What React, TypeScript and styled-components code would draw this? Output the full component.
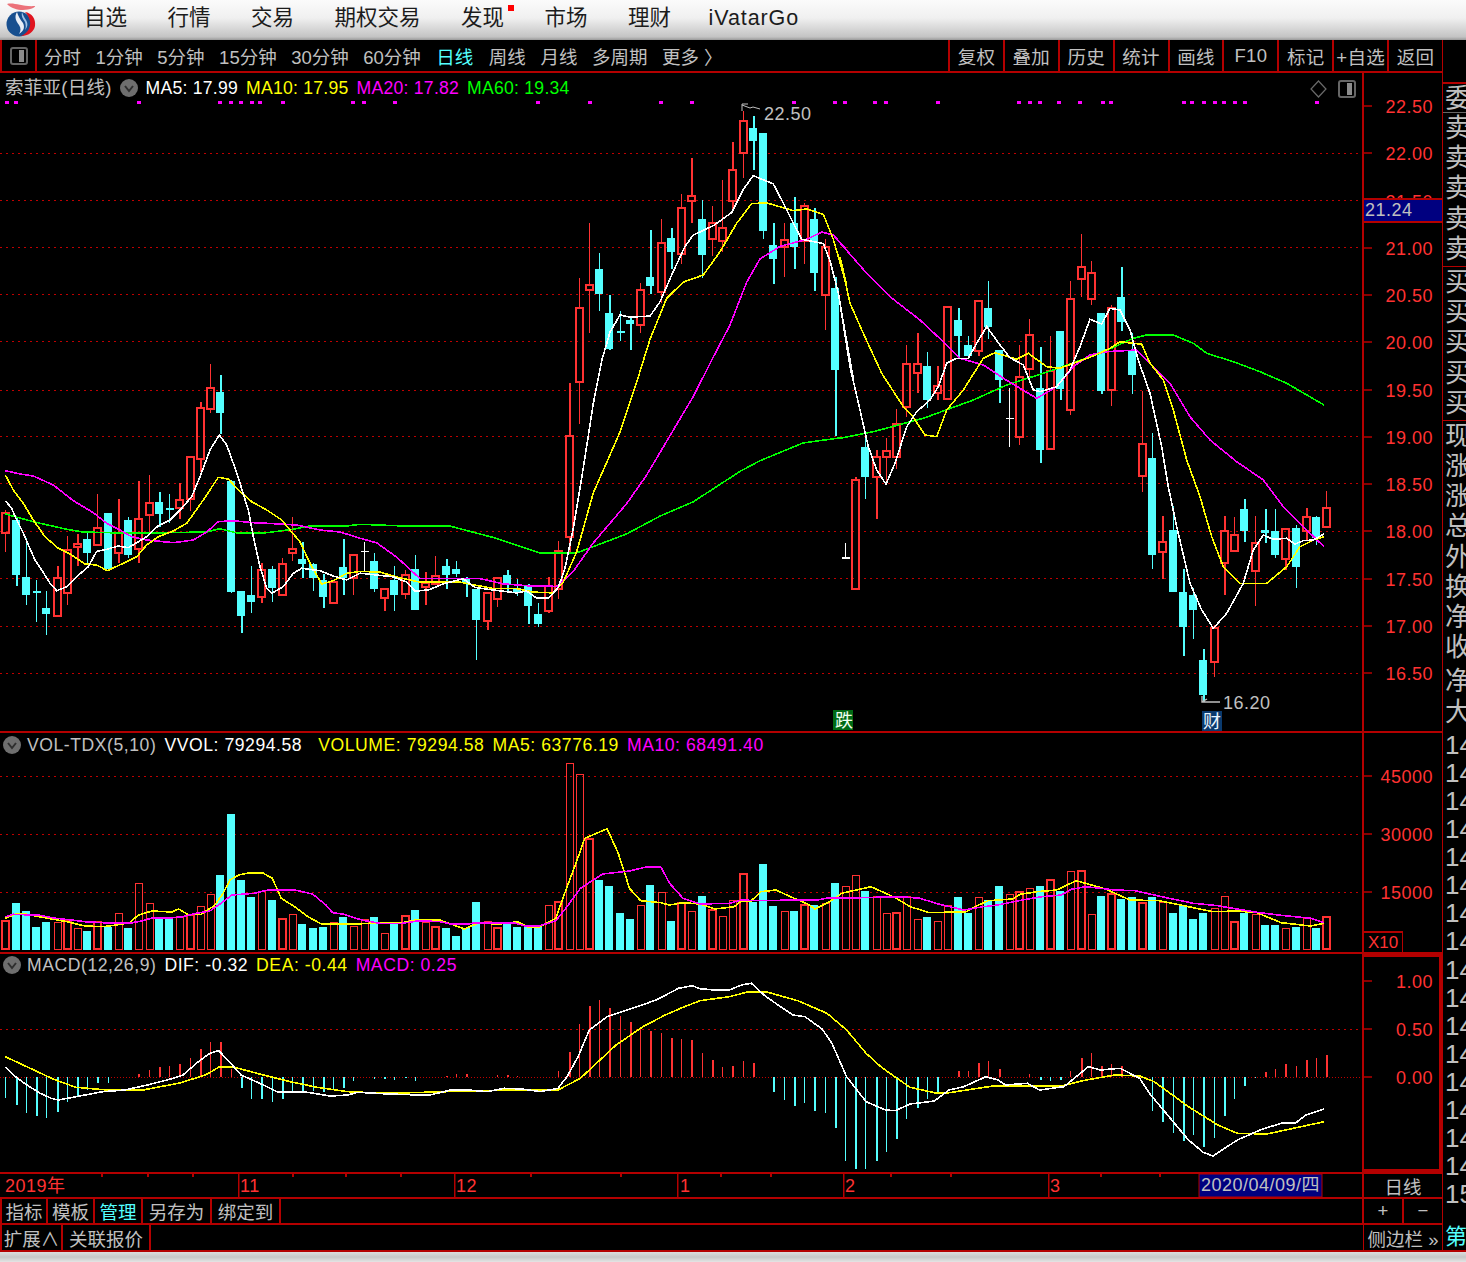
import React from 'react';
import styled, { createGlobalStyle } from 'styled-components';

const RED = '#ff3232';
const CYAN = '#54ffff';
const LINE = '#b40000';
const GREY = '#c0c0c0';
const MAGENTA = '#ff00ff';
const GREEN = '#00ff00';
const YELLOW = '#ffff00';
const SANS = `'Liberation Sans', 'Noto Sans CJK SC', sans-serif`;

type Kind = 'r' | 'c' | 'w';
type Candle = { top: number; open: number; close: number; bottom: number; kind: Kind };

// rows read off the picture: wick top, body top, body bottom, wick bottom, colour
const readCandles = (offset: number, scale: number, rows: [number, number, number, number, Kind][]) =>
  rows.map(([a, b, c, d, kind]): Candle => ({
    top: offset + a / scale,
    open: offset + b / scale,
    close: offset + c / scale,
    bottom: offset + d / scale,
    kind,
  }));

const candles: Candle[] = [
  ...readCandles(360, 3, [
    [450, 460, 520, 575, 'r'], [470, 480, 645, 678, 'c'], [535, 652, 705, 735, 'c'], [660, 693, 695, 785, 'c'],
    [694, 745, 762, 825, 'c'], [618, 655, 768, 768, 'r'], [528, 570, 700, 735, 'r'], [522, 552, 560, 618, 'r'],
    [518, 537, 580, 610, 'c'], [402, 505, 555, 555, 'r'], [458, 460, 628, 630, 'c'], [418, 518, 578, 610, 'r'],
    [472, 480, 585, 595, 'c'], [363, 478, 566, 608, 'r'], [345, 430, 466, 520, 'r'], [396, 426, 462, 500, 'c'],
    [402, 444, 446, 490, 'c'], [369, 421, 443, 476, 'r'], [290, 290, 418, 452, 'r'], [126, 145, 296, 335, 'r'],
    [12, 85, 146, 158, 'r'], [45, 96, 158, 222, 'c'], [360, 362, 695, 700, 'c'], [693, 693, 768, 818, 'c'],
    [618, 705, 725, 758, 'c'], [610, 631, 710, 728, 'r'], [618, 627, 684, 725, 'c'], [595, 613, 705, 705, 'r'],
    [472, 568, 578, 603, 'r'], [545, 597, 612, 654, 'c'], [610, 612, 654, 693, 'c'], [642, 660, 710, 743, 'c'],
    [660, 666, 728, 728, 'r'], [538, 621, 654, 705, 'c'], [585, 586, 654, 705, 'r'],
  ]),
  ...readCandles(100, 2.8, [
    [1238, 1262, 1264, 1320, 'w'], [1268, 1292, 1368, 1378, 'c'], [1368, 1368, 1395, 1430, 'r'], [1305, 1344, 1385, 1430, 'c'],
    [1316, 1330, 1382, 1398, 'r'], [1275, 1314, 1428, 1428, 'c'], [1322, 1352, 1364, 1413, 'r'], [1278, 1332, 1356, 1358, 'r'],
    [1286, 1306, 1330, 1368, 'c'], [1292, 1314, 1327, 1335, 'c'], [1335, 1340, 1352, 1392, 'c'], [1368, 1368, 1455, 1568, 'c'],
    [1380, 1380, 1460, 1483, 'r'], [1338, 1338, 1398, 1420, 'r'], [1316, 1330, 1355, 1375, 'c'], [1340, 1365, 1378, 1390, 'c'],
    [1355, 1362, 1416, 1466, 'c'], [1408, 1440, 1466, 1475, 'c'], [1336, 1362, 1430, 1436, 'r'], [1236, 1262, 1370, 1398, 'r'],
    [793, 942, 1224, 1265, 'r'], [497, 583, 790, 908, 'r'], [343, 517, 533, 652, 'r'], [427, 474, 543, 590, 'c'],
    [545, 597, 696, 700, 'c'], [592, 648, 650, 675, 'c'], [605, 617, 626, 700, 'c'], [513, 531, 629, 652, 'r'],
    [364, 496, 520, 542, 'c'], [333, 400, 537, 568, 'r'], [358, 387, 425, 472, 'c'], [264, 303, 431, 458, 'r'],
    [162, 268, 284, 344, 'r'], [281, 333, 433, 497, 'c'], [297, 344, 388, 436, 'r'], [224, 357, 396, 426, 'r'],
    [118, 195, 284, 305, 'r'], [30, 58, 147, 218, 'r'], [45, 78, 114, 195, 'c'], [92, 92, 366, 388, 'c'],
    [345, 406, 444, 515, 'c'], [343, 391, 411, 495, 'r'], [272, 345, 412, 472, 'c'], [288, 297, 396, 458, 'r'],
    [303, 334, 484, 535, 'c'], [390, 412, 545, 645, 'r'], [495, 526, 755, 940, 'c'],
  ]),
  ...readCandles(220, 3, [
    [970, 1011, 1013, 1013, 'w'], [770, 780, 1106, 1106, 'r'], [640, 682, 770, 836, 'c'], [690, 710, 772, 896, 'r'],
    [655, 692, 712, 790, 'r'], [567, 613, 712, 746, 'r'], [375, 433, 562, 590, 'r'], [340, 433, 460, 520, 'r'],
    [396, 438, 540, 564, 'c'], [438, 498, 520, 540, 'r'], [258, 260, 538, 540, 'r'], [264, 301, 347, 410, 'c'],
    [349, 376, 408, 412, 'c'], [242, 242, 394, 408, 'r'], [183, 265, 322, 357, 'c'], [390, 391, 480, 548, 'c'],
    [505, 593, 595, 680, 'w'], [376, 472, 652, 675, 'r'], [298, 344, 448, 473, 'r'], [380, 505, 690, 728, 'c'],
    [348, 452, 686, 686, 'r'], [334, 334, 507, 540, 'c'], [183, 238, 571, 586, 'r'], [42, 140, 178, 230, 'r'],
    [124, 160, 236, 255, 'r'], [280, 280, 514, 522, 'c'], [255, 264, 511, 558, 'r'], [142, 231, 305, 332, 'c'],
    [340, 390, 464, 522, 'c'], [513, 673, 769, 815, 'r'], [640, 714, 1006, 1046, 'c'], [888, 965, 997, 1078, 'r'],
    [858, 930, 1115, 1115, 'c'], [1047, 1116, 1220, 1307, 'c'], [1105, 1125, 1170, 1256, 'c'], [1287, 1320, 1425, 1445, 'c'],
    [1215, 1225, 1327, 1370, 'r'], [888, 932, 1028, 1125, 'r'], [890, 944, 994, 995, 'r'], [838, 868, 933, 966, 'c'],
    [888, 968, 1054, 1158, 'r'], [868, 931, 938, 970, 'c'], [868, 933, 1004, 1015, 'c'], [925, 926, 1016, 1050, 'r'],
    [915, 924, 1040, 1103, 'c'], [865, 890, 932, 960, 'r'], [888, 891, 955, 975, 'c'], [813, 865, 922, 924, 'r'],
  ]),
];

const slotX = (i: number) => Math.round(5.3 + i * 10.24);

// polyline helper: zoomed sample points back to page pixels
const trace = (ox: number, oy: number, sx: number, sy: number, xy: number[]) => {
  const out: string[] = [];
  for (let i = 0; i < xy.length; i += 2) {
    out.push(`${(ox + xy[i] / sx).toFixed(1)},${(oy + xy[i + 1] / sy).toFixed(1)}`);
  }
  return out.join(' ');
};

const ma5 = [
  trace(0, 360, 3, 3, [16, 422, 35, 445, 50, 480, 70, 520, 85, 555, 105, 600, 125, 630, 150, 670, 170, 692, 200, 680, 230, 650, 265, 620, 290, 574, 320, 568, 355, 558, 385, 563, 410, 548, 440, 530, 475, 497, 510, 480, 545, 445, 575, 410, 600, 350, 630, 270, 658, 225, 680, 255, 700, 310, 720, 370, 745, 450, 760, 530, 780, 620, 800, 685, 815, 700, 850, 680, 880, 640, 905, 625, 960, 632, 1000, 648, 1040, 660]),
  trace(360, 100, 3, 2.8, [0, 1325, 100, 1335, 140, 1350, 165, 1375, 205, 1372, 250, 1355, 310, 1340, 345, 1365, 400, 1372, 470, 1380, 500, 1375, 530, 1395, 565, 1395, 595, 1365, 615, 1310, 640, 1200, 670, 1030, 700, 850, 725, 730, 750, 650, 780, 602, 810, 608, 870, 605, 900, 565, 940, 480, 975, 410, 1000, 378, 1060, 352, 1115, 315, 1150, 250, 1180, 212, 1240, 235, 1265, 280, 1300, 345, 1325, 390, 1390, 402, 1410, 450, 1435, 540, 1460, 680, 1480, 780]),
  trace(840, 220, 3, 3, [0, 250, 30, 440, 60, 570, 85, 680, 110, 750, 138, 793, 165, 730, 200, 620, 230, 575, 270, 540, 295, 500, 320, 430, 350, 415, 385, 415, 410, 370, 440, 320, 480, 375, 510, 413, 550, 435, 580, 510, 600, 515, 650, 500, 690, 450, 720, 380, 750, 298, 785, 312, 810, 265, 840, 270, 870, 330, 895, 420, 930, 520, 965, 680, 985, 800, 1010, 920, 1050, 1090, 1085, 1170, 1120, 1225, 1160, 1180, 1210, 1090, 1240, 990, 1270, 945, 1300, 958, 1340, 955, 1365, 972, 1390, 962, 1420, 960, 1452, 942]),
].join(' ');

const ma10 = [
  trace(0, 360, 3, 3, [16, 345, 40, 390, 70, 430, 100, 480, 135, 530, 175, 565, 215, 585, 255, 612, 290, 615, 322, 632, 380, 605, 410, 590, 440, 555, 475, 530, 520, 513, 560, 490, 610, 420, 655, 352, 685, 357, 720, 395, 755, 425, 800, 450, 845, 480, 870, 510, 900, 545, 930, 610, 965, 672, 1000, 662, 1040, 640]),
  trace(360, 100, 3, 2.8, [0, 1320, 60, 1322, 120, 1338, 180, 1350, 300, 1350, 400, 1368, 470, 1368, 520, 1378, 580, 1380, 610, 1350, 650, 1265, 700, 1100, 780, 930, 830, 790, 870, 670, 920, 555, 970, 510, 1030, 490, 1080, 425, 1130, 345, 1175, 290, 1220, 288, 1300, 310, 1340, 305, 1390, 320, 1420, 390, 1460, 520]),
  trace(840, 220, 3, 3, [0, 110, 30, 250, 70, 340, 125, 460, 190, 560, 215, 585, 255, 645, 290, 650, 320, 570, 370, 510, 430, 415, 465, 398, 530, 418, 565, 400, 620, 440, 660, 445, 700, 430, 760, 408, 810, 385, 840, 365, 905, 373, 930, 430, 970, 480, 1000, 570, 1040, 720, 1080, 830, 1115, 950, 1150, 1040, 1200, 1090, 1280, 1090, 1340, 1040, 1380, 980, 1420, 960, 1452, 950]),
].join(' ');

const ma20 = [
  trace(0, 360, 3, 3, [16, 332, 60, 342, 100, 348, 160, 375, 220, 422, 280, 458, 320, 490, 360, 510, 395, 530, 440, 540, 520, 548, 580, 540, 620, 516, 655, 485, 700, 482, 760, 488, 800, 490, 890, 495, 960, 510, 1020, 516]),
  trace(360, 100, 3, 2.8, [0, 1227, 50, 1240, 110, 1280, 180, 1340, 240, 1340, 360, 1340, 430, 1355, 500, 1360, 590, 1362, 640, 1320, 700, 1240, 800, 1130, 860, 1050, 930, 940, 1000, 830, 1060, 720, 1110, 630, 1160, 510, 1200, 445, 1260, 410, 1340, 390, 1385, 370, 1420, 378, 1470, 430]),
  trace(840, 220, 3, 3, [0, 68, 80, 160, 150, 230, 240, 300, 320, 375, 360, 415, 430, 435, 490, 475, 590, 535, 650, 500, 700, 440, 750, 405, 800, 395, 890, 390, 940, 440, 990, 490, 1050, 590, 1110, 660, 1190, 725, 1270, 780, 1330, 860, 1400, 930, 1452, 980]),
].join(' ');

const ma60 = [
  trace(0, 360, 3, 3, [16, 462, 100, 485, 200, 508, 250, 516, 400, 520, 620, 516, 660, 506, 715, 520, 800, 518, 880, 508, 930, 498, 1040, 498]),
  trace(360, 100, 3, 2.8, [0, 1188, 140, 1193, 270, 1193, 400, 1225, 540, 1268, 650, 1268, 800, 1215, 900, 1165, 1000, 1125, 1140, 1040, 1200, 1010, 1330, 960, 1440, 946]),
  trace(840, 220, 3, 3, [0, 655, 100, 635, 250, 595, 400, 540, 500, 495, 640, 450, 780, 400, 880, 355, 920, 345, 1000, 345, 1060, 370, 1100, 400, 1180, 425, 1260, 455, 1340, 490, 1452, 555]),
].join(' ');

// volume bar tops, y in zoomed pixels (730 + y / 3)
const volTops = [
  574, 520, 544, 591, 576, 576, 574, 595, 603, 576, 591, 550, 594, 460, 520, 566, 566, 560, 555, 530, 493, 435, 252, 450, 500, 484,
  510, 568, 553, 582, 594, 591, 576, 561, 588, 568, 561, 610, 576, 558, 540, 576, 591, 594, 618, 594, 516, 573, 594, 582, 591, 591,
  591, 525, 516, 100, 132, 327, 450, 468, 549, 567, 525, 465, 486, 573, 520, 543, 498, 540, 558, 510, 432, 515, 402, 528, 543, 543,
  525, 525, 520, 459, 468, 435, 483, 498, 549, 549, 500, 567, 561, 573, 525, 501, 549, 501, 510, 468, 492, 486, 474, 468, 450, 483,
  423, 423, 553, 498, 492, 507, 501, 519, 501, 516, 549, 525, 567, 549, 534, 498, 576, 549, 553, 585, 585, 595, 591, 565, 594, 562,
];

const volMa5 = [
  trace(0, 730, 2.24, 3, [12, 565, 35, 552, 60, 553, 100, 563, 150, 575, 190, 588, 230, 590, 260, 585, 290, 578, 310, 555, 340, 543, 385, 546, 400, 537, 420, 553, 450, 553, 480, 527, 500, 490, 515, 450, 535, 435, 560, 428, 590, 430, 610, 445, 630, 505, 660, 530, 690, 560, 720, 582, 800, 582, 850, 578, 900, 578, 930, 570, 985, 570, 1010, 582, 1040, 597, 1070, 580, 1120, 582, 1160, 575, 1180, 590, 1210, 590, 1245, 565, 1265, 490, 1290, 400, 1310, 325, 1360, 296, 1385, 370, 1410, 475, 1435, 512, 1480, 518, 1500, 525, 1530, 518]),
  trace(700, 730, 2.047, 3, [0, 522, 30, 537, 70, 530, 85, 512, 105, 512, 125, 485, 155, 480, 190, 503, 220, 522, 235, 537, 265, 515, 290, 490, 350, 470, 400, 503, 430, 530, 470, 548, 545, 545, 570, 525, 590, 512, 640, 507, 655, 493, 690, 485, 730, 480, 770, 452, 830, 477, 880, 510, 940, 512, 1000, 530, 1050, 545, 1100, 543, 1140, 548, 1190, 578, 1250, 588, 1278, 580]),
].join(' ');

const volMa10 = [
  trace(0, 730, 2.24, 3, [12, 560, 30, 553, 90, 556, 120, 564, 160, 570, 190, 575, 230, 578, 290, 580, 320, 572, 340, 564, 390, 563, 410, 560, 440, 550, 470, 543, 500, 515, 520, 495, 570, 490, 600, 480, 660, 480, 700, 492, 730, 525, 745, 548, 770, 553, 810, 570, 850, 580, 900, 580, 940, 572, 985, 575, 1010, 582, 1050, 582, 1065, 578, 1150, 578, 1175, 587, 1210, 587, 1245, 572, 1270, 530, 1300, 475, 1350, 432, 1410, 423, 1450, 410, 1480, 410, 1500, 460, 1530, 505]),
  trace(700, 730, 2.047, 3, [0, 522, 60, 520, 85, 510, 120, 512, 200, 510, 240, 510, 265, 503, 330, 503, 410, 500, 450, 505, 490, 523, 540, 540, 580, 530, 610, 525, 660, 510, 700, 500, 740, 495, 760, 478, 790, 470, 850, 480, 890, 482, 930, 495, 960, 505, 1010, 520, 1060, 527, 1090, 535, 1140, 547, 1190, 556, 1250, 565, 1278, 578]),
].join(' ');

// MACD histogram ends, same zoomed scale, 0 = no bar
const macdEnds = [
  445, 465, 490, 497, 505, 487, 457, 440, 420, 398, 398, 0, 0, 372, 360, 350, 348, 342, 323, 297, 276, 276, 358, 413, 447, 447,
  455, 446, 430, 425, 422, 425, 420, 413, 392, 0, 388, 388, 390, 384, 392, 0, 381, 377, 373, 372, 0, 0, 376, 376, 377, 0,
  0, 380, 363, 306, 222, 168, 150, 175, 198, 216, 232, 243, 250, 264, 267, 270, 309, 330, 352, 348, 333, 340, 0, 425, 450, 468,
  458, 482, 488, 534, 632, 656, 656, 632, 605, 566, 507, 475, 446, 428, 0, 363, 363, 338, 333, 358, 0, 0, 372, 390, 392, 390,
  363, 323, 309, 348, 342, 348, 372, 0, 482, 515, 548, 572, 556, 590, 563, 497, 446, 407, 384, 366, 357, 342, 348, 330, 323, 315,
];

const dif = [
  trace(0, 950, 2.24, 3, [12, 352, 35, 380, 60, 405, 90, 430, 115, 445, 130, 450, 170, 440, 230, 425, 280, 420, 330, 405, 380, 388, 410, 375, 440, 340, 470, 310, 490, 302, 510, 330, 540, 375, 590, 405, 620, 425, 680, 425, 740, 438, 780, 435, 800, 427, 870, 432, 960, 436, 1010, 420, 1050, 420, 1090, 425, 1130, 415, 1170, 417, 1210, 425, 1250, 415, 1270, 380, 1295, 320, 1320, 240, 1360, 200, 1410, 178, 1470, 150, 1520, 115, 1550, 107]),
  trace(700, 950, 2.047, 3, [0, 116, 30, 120, 60, 120, 85, 105, 105, 100, 135, 140, 190, 195, 215, 200, 250, 237, 270, 280, 300, 380, 340, 455, 380, 480, 400, 482, 430, 462, 480, 453, 510, 420, 540, 410, 585, 380, 610, 390, 625, 405, 670, 400, 695, 420, 745, 410, 795, 350, 820, 360, 860, 355, 900, 385, 920, 430, 960, 500, 1000, 570, 1030, 607, 1050, 618, 1100, 570, 1150, 538, 1190, 520, 1220, 518, 1240, 495, 1278, 477]),
].join(' ');

const dea = [
  trace(0, 950, 2.24, 3, [12, 320, 60, 350, 120, 388, 170, 412, 240, 420, 320, 420, 400, 400, 460, 375, 490, 352, 520, 350, 590, 375, 650, 395, 710, 412, 780, 425, 870, 430, 1000, 425, 1150, 420, 1250, 420, 1300, 385, 1380, 285, 1440, 230, 1490, 195, 1530, 172]),
  trace(700, 950, 2.047, 3, [0, 152, 60, 140, 100, 125, 135, 125, 200, 152, 260, 190, 300, 240, 340, 310, 370, 350, 400, 382, 430, 412, 480, 428, 510, 428, 600, 408, 740, 408, 790, 390, 850, 375, 900, 378, 930, 395, 1000, 470, 1060, 525, 1100, 550, 1160, 552, 1278, 515]),
].join(' ');

const signalDots = [
  5, 14, 137, 218, 229, 239, 250, 258, 281, 351, 362, 393, 536, 588, 659, 690, 792, 833, 843, 873, 884, 936, 1017, 1028, 1038, 1057,
  1078, 1101, 1109, 1182, 1190, 1202, 1213, 1222, 1233, 1243, 1315,
];

const priceGrid = [153, 200, 247, 294, 341, 390, 436, 483, 531, 578, 626, 673];
const priceAxis: [string, number][] = [
  ['22.50', 106], ['22.00', 153], ['21.50', 201], ['21.00', 248], ['20.50', 295], ['20.00', 342], ['19.50', 390],
  ['19.00', 437], ['18.50', 484], ['18.00', 531], ['17.50', 579], ['17.00', 626], ['16.50', 673],
];

const periods = ['分时', '1分钟', '5分钟', '15分钟', '30分钟', '60分钟', '日线', '周线', '月线', '多周期', '更多 〉'];
const actions = ['复权', '叠加', '历史', '统计', '画线', 'F10', '标记', '+自选', '返回'];
const menu = ['自选', '行情', '交易', '期权交易', '发现', '市场', '理财'];
const sellRows = ['卖', '卖', '卖', '卖', '卖'];
const buyRows = ['买', '买', '买', '买', '买'];
const statRows = ['现', '涨', '涨', '总', '外', '换', '净', '收'];
const sideNums = Array.from({ length: 16 }, () => '14');

const GlobalStyle = createGlobalStyle`
  html, body {
    margin: 0;
    background: #000;
    overflow: hidden;
  }
`;

const Page = styled.div`
  width: 1466px;
  height: 1262px;
  display: flex;
  flex-direction: column;
  background: #000;
  font-family: ${SANS};
  color: ${GREY};
  overflow: hidden;
`;

const TopBar = styled.header`
  height: 40px;
  flex: none;
  box-sizing: border-box;
  display: flex;
  align-items: center;
  padding-left: 6px;
  background: linear-gradient(#fbfbfb 0%, #f0f0f0 45%, #c4c4c4 92%, #9a9a9a 100%);
`;

const Menu = styled.nav`
  display: flex;
  gap: 40.5px;
  margin-left: 46px;
  margin-top: -5px;
`;

const MenuItem = styled.span<{ $badge?: boolean; $latin?: boolean }>`
  position: relative;
  font-size: 21.5px;
  line-height: 26px;
  color: #1c1c1c;
  letter-spacing: ${p => (p.$latin ? '0.9px' : '0')};
  margin-left: ${p => (p.$latin ? '-3px' : '0')};

  ${p =>
    p.$badge &&
    `&::after {
      content: '';
      position: absolute;
      top: 0;
      right: -10px;
      width: 6px;
      height: 6px;
      background: #ff0000;
    }`}
`;

const Workspace = styled.div`
  height: 1212px;
  flex: none;
  display: flex;
`;

const Main = styled.div`
  width: 1442px;
  flex: none;
  display: flex;
  flex-direction: column;
`;

const Toolbar = styled.div`
  height: 33px;
  flex: none;
  box-sizing: border-box;
  display: flex;
  align-items: stretch;
  border-bottom: 2px solid ${LINE};
  font-size: 18.5px;
`;

const PaneToggle = styled.div`
  width: 37px;
  box-sizing: border-box;
  display: flex;
  align-items: center;
  justify-content: center;
  border-left: 2px solid ${LINE};
  border-right: 2px solid ${LINE};
`;

const Periods = styled.div`
  display: flex;
  align-items: center;
  gap: 14.5px;
  padding-left: 7px;
  white-space: nowrap;
`;

const Period = styled.span<{ $active?: boolean }>`
  color: ${p => (p.$active ? CYAN : GREY)};
  margin: ${p => (p.$active ? '0 1px' : '0')};
`;

const Actions = styled.div`
  margin-left: auto;
  display: flex;
`;

const Action = styled.span`
  width: 54.9px;
  box-sizing: border-box;
  display: flex;
  align-items: center;
  justify-content: center;
  border-left: 2px solid ${LINE};
  white-space: nowrap;
  letter-spacing: 0.3px;
`;

const Panel = styled.section<{ $height: number; $ruled?: boolean }>`
  height: ${p => p.$height}px;
  flex: none;
  box-sizing: border-box;
  display: flex;
  border-top: ${p => (p.$ruled ? `2px solid ${LINE}` : 'none')};
  position: relative;
`;

const Plot = styled.svg`
  display: block;
  width: 1362px;
  height: 100%;
  flex: none;
`;

const AxisColumn = styled.div<{ $focus?: boolean }>`
  flex: 1;
  position: relative;
  border-left: 2px solid ${LINE};
  box-shadow: ${p => (p.$focus ? `inset 0 3px ${LINE}, inset -3px 0 ${LINE}, inset 0 -3px ${LINE}` : 'none')};
`;

const AxisSvg = styled.svg`
  display: block;
  width: 78px;
  height: 100%;
`;

const ChartText = styled.text<{ $size?: number; $fill?: string }>`
  font-family: ${SANS};
  font-size: ${p => p.$size ?? 18}px;
  letter-spacing: 0.5px;
  fill: ${p => p.$fill ?? GREY};
`;

const Legend = styled.div<{ $top: number; $left: number; $tracking?: number }>`
  position: absolute;
  top: ${p => p.$top}px;
  left: ${p => p.$left}px;
  display: flex;
  align-items: center;
  gap: 8px;
  font-size: 17.6px;
  line-height: 22px;
  letter-spacing: ${p => p.$tracking ?? 0.55}px;
  white-space: nowrap;
  pointer-events: none;
`;

const LegendItem = styled.span<{ $color: string; $gap?: number; $size?: number }>`
  color: ${p => p.$color};
  margin-left: ${p => p.$gap ?? 0}px;
  font-size: ${p => p.$size ?? 17.6}px;
`;

const CornerIcons = styled.div`
  position: absolute;
  top: 7px;
  right: 86px;
  display: flex;
  align-items: center;
  gap: 11px;
`;

const PriceTag = styled.div`
  position: absolute;
  top: 125px;
  left: 0;
  right: 0;
  height: 25px;
  box-sizing: border-box;
  padding-left: 1px;
  display: flex;
  align-items: center;
  background: #000080;
  border-top: 2px solid ${LINE};
  border-bottom: 2px solid ${LINE};
  font-size: 18px;
  letter-spacing: 0.5px;
`;

const ScaleTag = styled.div`
  position: absolute;
  left: 0;
  bottom: 0;
  width: 39px;
  height: 21px;
  box-sizing: border-box;
  border-top: 2px solid ${LINE};
  border-right: 1px solid ${LINE};
  display: flex;
  align-items: center;
  justify-content: center;
  color: ${RED};
  font-size: 17px;
`;

const DateCell = styled.div`
  flex: 1;
  display: flex;
  align-items: center;
  justify-content: center;
  border-left: 2px solid ${LINE};
  font-size: 18.5px;
`;

const ToolRow = styled.div<{ $height: number; $closed?: boolean }>`
  height: ${p => p.$height}px;
  flex: none;
  box-sizing: border-box;
  display: flex;
  align-items: stretch;
  border-top: 2px solid ${LINE};
  border-bottom: ${p => (p.$closed ? `2px solid ${LINE}` : 'none')};
  font-size: 18.5px;
  white-space: nowrap;
`;

const Tab = styled.span<{ $width: number; $active?: boolean; $first?: boolean }>`
  width: ${p => p.$width}px;
  box-sizing: border-box;
  display: flex;
  align-items: center;
  justify-content: center;
  border-right: 2px solid ${LINE};
  border-left: ${p => (p.$first ? `2px solid ${LINE}` : 'none')};
  color: ${p => (p.$active ? CYAN : GREY)};
`;

const ToolSpacer = styled.div`
  flex: 1;
`;

const ZoomBtns = styled.div`
  width: 80px;
  display: flex;
  border-left: 2px solid ${LINE};
  box-sizing: border-box;
`;

const ZoomBtn = styled.span`
  flex: 1;
  display: flex;
  align-items: center;
  justify-content: center;
  &:first-child {
    border-right: 2px solid ${LINE};
  }
`;

const SideToggle = styled.span`
  width: 79px;
  box-sizing: border-box;
  display: flex;
  align-items: center;
  justify-content: center;
  border-left: 1px solid ${LINE};
`;

const Sidebar = styled.aside`
  flex: 1;
  min-width: 0;
  display: flex;
  flex-direction: column;
  box-sizing: border-box;
  border-left: 1px solid ${LINE};
  border-bottom: 2px solid ${LINE};
  overflow: hidden;
  padding-left: 2px;
  font-size: 26px;
`;

const QuoteHead = styled.div`
  height: 31px;
  flex: none;
  margin: 42px 0 0 -2px;
  padding-left: 2px;
  box-sizing: border-box;
  border-top: 2px solid ${LINE};
  border-bottom: 1px solid #666;
  line-height: 29px;
`;

const QuoteGroup = styled.div<{ $ruled?: boolean }>`
  flex: none;
  margin-left: -2px;
  padding-left: 2px;
  border-top: ${p => (p.$ruled ? `1px solid ${LINE}` : 'none')};
  margin-top: ${p => (p.$ruled ? '2px' : '0')};
`;

const QuoteChar = styled.div<{ $drop?: number }>`
  height: 30.2px;
  line-height: 30px;
  white-space: nowrap;
  margin-top: ${p => p.$drop ?? 0}px;
`;

const SideNum = styled.div`
  height: 28.1px;
  line-height: 28px;
  font-size: 26px;
`;

const SideNums = styled.div`
  margin-top: 4px;
  flex: none;
`;

const SideFoot = styled.div`
  margin-top: 16px;
  color: ${CYAN};
  font-size: 22px;
  line-height: 26px;
`;

const FootBand = styled.div`
  height: 10px;
  flex: none;
  background: linear-gradient(#dcdcdc, #c6c6c6 50%, #e4e4e4);
`;

function Logo() {
  return (
    <svg width="32" height="36" viewBox="0 0 32 36">
      <path d="M1 2 C8 0 16 5 29 4 C30 5 24 8 17 8 C11 8 5 6 1 2 Z" fill="#e8505a" opacity="0.8" />
      <circle cx="13" cy="22" r="12.5" fill="#174f8f" />
      <path d="M19 10 C26 11 30 17 29 24 C28 30 22 34 15 34 C22 31 25 25 24 19 C23 15 21 12 19 10 Z" fill="#e0141f" />
      <path d="M11 10 C8 15 10 19 13 23 C15 26 15 29 13 32 C18 29 19 25 17 21 C14 17 12 14 11 10 Z" fill="#e8eef6" />
      <path d="M16 10 C15 14 17 17 19 20 C20 23 20 26 19 28 C22 25 22 21 20 18 C18 15 17 13 16 10 Z" fill="#9fc2e6" />
    </svg>
  );
}

function Chevron() {
  return (
    <svg width="18" height="18" viewBox="0 0 18 18">
      <circle cx="9" cy="9" r="9" fill="#6e6e6e" />
      <path d="M5 7 L9 12 L13 7" fill="none" stroke="#2e2e2e" strokeWidth="2" />
    </svg>
  );
}

function PaneIcon() {
  return (
    <svg width="18" height="18" viewBox="0 0 18 18">
      <rect x="1" y="1" width="16" height="16" rx="2" fill="none" stroke="#666" strokeWidth="2" />
      <rect x="9" y="3" width="5" height="12" fill="#8c8c8c" />
    </svg>
  );
}

function Diamond() {
  return (
    <svg width="17" height="18" viewBox="0 0 17 18">
      <path d="M8.5 1 L16 9 L8.5 17 L1 9 Z" fill="none" stroke="#6a6a6a" strokeWidth="1.2" />
    </svg>
  );
}

function GridLines({ rows, dash = '2 4' }: { rows: number[]; dash?: string }) {
  return (
    <>
      {rows.map(y => (
        <line key={y} x1={0} x2={1362} y1={y + 0.5} y2={y + 0.5} stroke="#c00000" strokeDasharray={dash} shapeRendering="crispEdges" />
      ))}
    </>
  );
}

function Trend({ points, color, width = 1.6 }: { points: string; color: string; width?: number }) {
  return <polyline points={points} fill="none" stroke={color} strokeWidth={width} shapeRendering="crispEdges" />;
}

function CandleMark({ c, i }: { c: Candle; i: number }) {
  const x = slotX(i);
  const color = c.kind === 'r' ? RED : c.kind === 'c' ? CYAN : '#ffffff';
  const wick = c.kind === 'r' && i % 3 === 0 ? 1 : i % 2 ? 2 : 1;
  if (c.close - c.open < 2) {
    return (
      <g shapeRendering="crispEdges">
        <rect x={x} y={c.top} width={1} height={c.bottom - c.top} fill={color} />
        <rect x={x - 3} y={c.open} width={8} height={1.5} fill={color} />
      </g>
    );
  }
  return (
    <g shapeRendering="crispEdges">
      <rect x={x} y={c.top} width={wick} height={Math.max(c.open - c.top, 0)} fill={color} />
      <rect x={x} y={c.close} width={wick} height={Math.max(c.bottom - c.close, 0)} fill={color} />
      {c.kind === 'r' ? (
        <rect x={x - 3} y={c.open} width={7} height={c.close - c.open} fill="none" stroke={color} strokeWidth={2} />
      ) : (
        <rect x={x - 4} y={c.open} width={8} height={c.close - c.open} fill={color} />
      )}
    </g>
  );
}

function AxisLabels({ rows }: { rows: [string, number][] }) {
  return (
    <>
      {rows.map(([label, y]) => (
        <g key={label}>
          <line x1={1364} x2={1372} y1={y} y2={y} stroke={LINE} strokeWidth={1.5} />
          <ChartText x={1433} y={y + 7} textAnchor="end" $fill={RED}>
            {label}
          </ChartText>
        </g>
      ))}
    </>
  );
}

function PriceChart() {
  return (
    <Panel $height={658}>
      <Plot viewBox="0 73 1362 658">
        <GridLines rows={priceGrid} />
        {signalDots.map(x => (
          <rect key={x} x={x} y={101} width={4} height={3} fill={MAGENTA} shapeRendering="crispEdges" />
        ))}
        {candles.map((c, i) => (
          <CandleMark key={i} c={c} i={i} />
        ))}
        <Trend points={ma60} color={GREEN} />
        <Trend points={ma20} color={MAGENTA} />
        <Trend points={ma10} color={YELLOW} />
        <Trend points={ma5} color="#ffffff" />
        <path d="M742 111 V104 H748 M742 105 L750 108 L753 107 L760 109" fill="none" stroke={GREY} strokeWidth={1} />
        <ChartText x={764} y={120}>22.50</ChartText>
        <path d="M1202 696 V702 H1220 M1202 702 L1207 699" fill="none" stroke={GREY} strokeWidth={1.4} />
        <ChartText x={1223} y={709}>16.20</ChartText>
        <rect x={833} y={710} width={20} height={20} fill="#006a14" />
        <ChartText x={835} y={727} $fill="#f0fff0">跌</ChartText>
        <rect x={1202} y={711} width={20} height={20} fill="#0a3a6e" />
        <ChartText x={1203} y={728} $fill="#e8f4ff">财</ChartText>
      </Plot>
      <Legend $top={4} $left={5} $tracking={0.25}>
        <LegendItem $color={GREY} $size={18.5}>索菲亚(日线)</LegendItem>
        <Chevron />
        <LegendItem $color="#ffffff">MA5: 17.99</LegendItem>
        <LegendItem $color={YELLOW}>MA10: 17.95</LegendItem>
        <LegendItem $color={MAGENTA}>MA20: 17.82</LegendItem>
        <LegendItem $color={GREEN}>MA60: 19.34</LegendItem>
      </Legend>
      <CornerIcons>
        <Diamond />
        <PaneIcon />
      </CornerIcons>
      <AxisColumn>
        <AxisSvg viewBox="1364 73 78 658">
          <AxisLabels rows={priceAxis} />
        </AxisSvg>
        <PriceTag>21.24</PriceTag>
      </AxisColumn>
    </Panel>
  );
}

function VolumeChart() {
  return (
    <Panel $height={221} $ruled>
      <Plot viewBox="0 733 1362 219">
        <GridLines rows={[776, 834, 892]} />
        {volTops.map((top, i) => {
          const y = 730 + top / 3;
          const x = slotX(i);
          return candles[i].kind === 'c' ? (
            <rect key={i} x={x - 4} y={y} width={8} height={950 - y} fill={CYAN} shapeRendering="crispEdges" />
          ) : (
            <rect key={i} x={x - 3} y={y} width={7} height={949 - y} fill="none" stroke={RED} strokeWidth={i % 3 === 0 ? 2 : 1} shapeRendering="crispEdges" />
          );
        })}
        <Trend points={volMa5} color={YELLOW} />
        <Trend points={volMa10} color={MAGENTA} />
      </Plot>
      <Legend $top={1} $left={3}>
        <Chevron />
        <LegendItem $color={GREY} $gap={-2}>VOL-TDX(5,10)</LegendItem>
        <LegendItem $color="#ffffff">VVOL: 79294.58</LegendItem>
        <LegendItem $color={YELLOW} $gap={8}>VOLUME: 79294.58</LegendItem>
        <LegendItem $color={YELLOW}>MA5: 63776.19</LegendItem>
        <LegendItem $color={MAGENTA}>MA10: 68491.40</LegendItem>
      </Legend>
      <AxisColumn>
        <AxisSvg viewBox="1364 733 78 219">
          <AxisLabels rows={[['45000', 776], ['30000', 834], ['15000', 892]]} />
        </AxisSvg>
        <ScaleTag>X10</ScaleTag>
      </AxisColumn>
    </Panel>
  );
}

function MacdChart() {
  return (
    <Panel $height={220} $ruled>
      <Plot viewBox="0 954 1362 218">
        <GridLines rows={[1029]} />
        <GridLines rows={[1077]} dash="1 2" />
        {macdEnds.map((end, i) => {
          if (!end) return null;
          const y = 950 + end / 3;
          return (
            <rect
              key={i}
              x={slotX(i)}
              y={Math.min(y, 1077)}
              width={i % 2 ? 2 : 1}
              height={Math.abs(y - 1077)}
              fill={end > 382 ? CYAN : RED}
              shapeRendering="crispEdges"
            />
          );
        })}
        <Trend points={dea} color={YELLOW} />
        <Trend points={dif} color="#ffffff" />
      </Plot>
      <Legend $top={0} $left={3}>
        <Chevron />
        <LegendItem $color={GREY} $gap={-2}>MACD(12,26,9)</LegendItem>
        <LegendItem $color="#ffffff">DIF: -0.32</LegendItem>
        <LegendItem $color={YELLOW}>DEA: -0.44</LegendItem>
        <LegendItem $color={MAGENTA}>MACD: 0.25</LegendItem>
      </Legend>
      <AxisColumn $focus>
        <AxisSvg viewBox="1364 954 78 218">
          <AxisLabels rows={[['1.00', 981], ['0.50', 1029], ['0.00', 1077]]} />
        </AxisSvg>
      </AxisColumn>
    </Panel>
  );
}

function DateAxis() {
  const ticks = [101, 147, 192, 292, 345, 400, 530, 620, 720, 770, 890, 950, 1100, 1159];
  const months: [string, number, number][] = [['11', 238, 240], ['12', 454, 456], ['1', 677, 680], ['2', 843, 845], ['3', 1048, 1050]];
  return (
    <Panel $height={25} $ruled>
      <Plot viewBox="0 1174 1362 23">
        {ticks.map(x => (
          <rect key={x} x={x} y={1174} width={2} height={3} fill={LINE} />
        ))}
        <ChartText x={5} y={1192} $fill={RED}>2019年</ChartText>
        {months.map(([label, line, x]) => (
          <g key={label}>
            <rect x={line} y={1174} width={1.5} height={23} fill={LINE} />
            <ChartText x={x} y={1192} $fill={RED}>{label}</ChartText>
          </g>
        ))}
        <rect x={1199} y={1174} width={123} height={23} fill="#000080" stroke={LINE} />
        <ChartText x={1201} y={1191}>2020/04/09/四</ChartText>
      </Plot>
      <DateCell>日线</DateCell>
    </Panel>
  );
}

function Quotes() {
  return (
    <Sidebar>
      <QuoteHead>委</QuoteHead>
      <QuoteGroup>
        {sellRows.map((ch, i) => (
          <QuoteChar key={i}>{ch}</QuoteChar>
        ))}
      </QuoteGroup>
      <QuoteGroup $ruled>
        {buyRows.map((ch, i) => (
          <QuoteChar key={i}>{ch}</QuoteChar>
        ))}
      </QuoteGroup>
      <QuoteGroup $ruled>
        {statRows.map((ch, i) => (
          <QuoteChar key={i}>{ch}</QuoteChar>
        ))}
        <QuoteChar $drop={4}>净</QuoteChar>
        <QuoteChar>大</QuoteChar>
      </QuoteGroup>
      <SideNums>
        {sideNums.map((n, i) => (
          <SideNum key={i}>{n}</SideNum>
        ))}
        <SideNum>15</SideNum>
      </SideNums>
      <SideFoot>第</SideFoot>
    </Sidebar>
  );
}

export default function App() {
  return (
    <Page>
      <GlobalStyle />
      <TopBar>
        <Logo />
        <Menu>
          {menu.map(item => (
            <MenuItem key={item} $badge={item === '发现'}>
              {item}
            </MenuItem>
          ))}
          <MenuItem $latin>iVatarGo</MenuItem>
        </Menu>
      </TopBar>
      <Workspace>
        <Main>
          <Toolbar>
            <PaneToggle>
              <PaneIcon />
            </PaneToggle>
            <Periods>
              {periods.map(p => (
                <Period key={p} $active={p === '日线'}>
                  {p}
                </Period>
              ))}
            </Periods>
            <Actions>
              {actions.map(a => (
                <Action key={a}>{a}</Action>
              ))}
            </Actions>
          </Toolbar>
          <PriceChart />
          <VolumeChart />
          <MacdChart />
          <DateAxis />
          <ToolRow $height={26}>
            <Tab $first $width={48}>指标</Tab>
            <Tab $width={47}>模板</Tab>
            <Tab $width={48} $active>管理</Tab>
            <Tab $width={69}>另存为</Tab>
            <Tab $width={69}>绑定到</Tab>
            <ToolSpacer />
            <ZoomBtns>
              <ZoomBtn>+</ZoomBtn>
              <ZoomBtn>−</ZoomBtn>
            </ZoomBtns>
          </ToolRow>
          <ToolRow $height={29} $closed>
            <Tab $first $width={63}>扩展∧</Tab>
            <Tab $width={88}>关联报价</Tab>
            <ToolSpacer />
            <SideToggle>侧边栏 »</SideToggle>
          </ToolRow>
        </Main>
        <Quotes />
      </Workspace>
      <FootBand />
    </Page>
  );
}
